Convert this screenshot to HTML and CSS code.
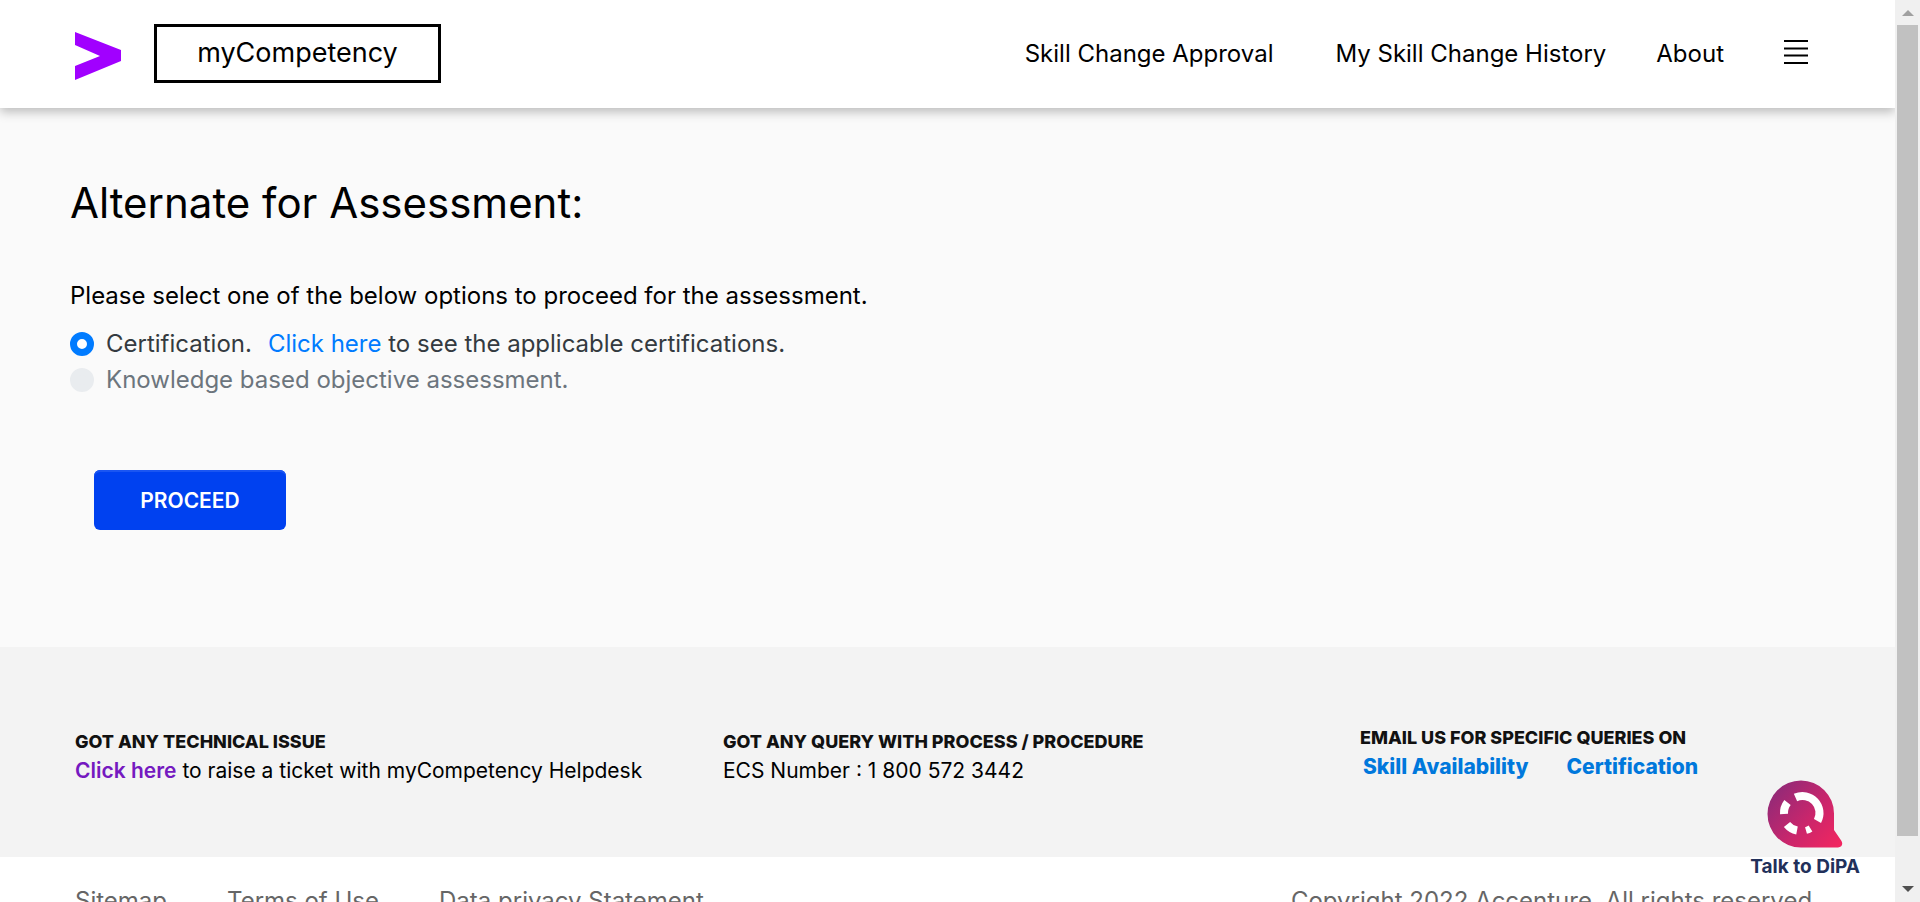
FILE: index.html
```html
<!DOCTYPE html>
<html lang="en">
<head>
<meta charset="utf-8">
<title>myCompetency</title>
<link rel="stylesheet" href="styles.css">
</head>
<body>
<div class="window">
  <div class="page">
    <header class="header">
      <a class="logo" href="#" aria-label="Home">
        <svg width="46" height="48" viewBox="0 0 46 48" aria-hidden="true"><path fill="#a100ff" d="M0 0L46 18V29L0 48V34L25 24L0 13Z"/></svg>
      </a>
      <a class="brand" href="#">myCompetency</a>
      <nav class="nav">
        <a class="nav-approval" href="#">Skill Change Approval</a>
        <a class="nav-history" href="#">My Skill Change History</a>
        <a class="nav-about" href="#">About</a>
        <button class="menu" type="button" aria-label="Menu">
          <svg width="24" height="26" viewBox="0 0 24 26" aria-hidden="true"><path stroke="#000" stroke-width="2" d="M0 2H24M0 9.500H24M0 16.500H24M0 24H24"/></svg>
        </button>
      </nav>
    </header>

    <main class="main">
      <h1 class="title">Alternate for Assessment:</h1>
      <p class="intro">Please select one of the below options to proceed for the assessment.</p>
      <form class="form">
        <div class="option">
          <input class="radio" type="radio" name="mode" id="cert" checked>
          <label for="cert">Certification.</label>
          <span class="hint"><a href="#">Click here</a> to see the applicable certifications.</span>
        </div>
        <div class="option option-disabled">
          <input class="radio" type="radio" name="mode" id="know" disabled>
          <label for="know">Knowledge based objective assessment.</label>
        </div>
        <button class="proceed" type="button">PROCEED</button>
      </form>
    </main>

    <section class="support">
      <div class="support-col">
        <h2>GOT ANY TECHNICAL ISSUE</h2>
        <p><a class="ticket" href="#">Click here</a> to raise a ticket with myCompetency Helpdesk</p>
      </div>
      <div class="support-col">
        <h2>GOT ANY QUERY WITH PROCESS / PROCEDURE</h2>
        <p>ECS Number : 1 800 572 3442</p>
      </div>
      <div class="support-col support-mail">
        <h2>EMAIL US FOR SPECIFIC QUERIES ON</h2>
        <p class="mail-links"><a href="#">Skill Availability</a><a href="#">Certification</a></p>
      </div>
    </section>

    <footer class="footer">
      <a href="#">Sitemap</a>
      <a href="#">Terms of Use</a>
      <a href="#">Data privacy Statement</a>
      <span class="copyright">Copyright 2022 Accenture. All rights reserved.</span>
    </footer>

    <button class="chat" type="button">
      <svg width="76" height="68" viewBox="0 0 76 68" aria-hidden="true">
        <defs><linearGradient id="g" x1="0" y1="0.200" x2="1" y2="1"><stop offset="0" stop-color="#8f2a78"/><stop offset="0.500" stop-color="#c8266c"/><stop offset="1" stop-color="#f5265f"/></linearGradient></defs>
        <path fill="url(#g)" d="M34 0.500A33 33 0 0 1 67 33.500V50L74.500 61Q77 66.500 71 67.500H34A33.500 33.500 0 0 1 34 0.500Z"/>
        <g fill="none" stroke="#fff" stroke-width="8">
          <path d="M28.500 17.500A17 17 0 0 1 50.500 41"/>
          <path d="M20.500 22.500A17 17 0 0 0 17 34"/>
          <path d="M20 44.500A17 17 0 0 0 30 50.500"/>
          <path stroke-width="7" d="M39 50.500A17 17 0 0 0 43.500 48.500"/>
        </g>
      </svg>
      <span>Talk to DiPA</span>
    </button>
  </div>

  <div class="scrollbar" aria-hidden="true">
    <svg width="12" height="6" viewBox="0 0 12 6"><path fill="#a0a0a0" d="M0 6L6 0L12 6Z"/></svg>
    <div class="thumb"></div>
    <svg width="12" height="6" viewBox="0 0 12 6"><path fill="#505050" d="M0 0L6 6L12 0Z"/></svg>
  </div>
</div>
</body>
</html>
```
FILE: styles.css
```css
* { box-sizing: border-box; }
body {
  margin: 0;
  font-family: Inter, "Open Sans", sans-serif;
  font-size: 24px;
  font-weight: 400;
  line-height: 36px;
  color: #000;
  background: #fff;
}
a { text-decoration: none; color: inherit; }
h1, h2, p { margin: 0; }
button { font-family: inherit; border: 0; padding: 0; cursor: pointer; }
svg { display: block; }

.window { display: flex; height: 100vh; overflow: hidden; }
.page { position: relative; flex: 1; min-width: 0; overflow: hidden; }

.header {
  position: relative;
  display: flex;
  align-items: center;
  height: 108px;
  padding: 0 87px 0 75px;
  background: #fff;
  box-shadow: 0 4px 10px rgba(0, 0, 0, 0.25);
}
.logo { margin-top: 4px; }
.brand {
  display: flex;
  align-items: center;
  justify-content: center;
  width: 287px;
  height: 59px;
  margin: 0 0 2px 33px;
  border: 3px solid #000;
  font-size: 27px;
}
.nav { display: flex; align-items: center; margin-left: auto; }
.nav-approval { margin-right: 62px; }
.nav-history { margin-right: 50px; }
.nav-about { margin-right: 60px; }
.menu { margin-bottom: 4px; background: none; }

.main { min-height: 539px; padding: 66px 70px 0; background: #fafafa; }
.title { font-size: 42px; font-weight: 400; line-height: 58px; }
.intro { margin-top: 46px; }
.form { margin-top: 12px; }
.option { display: flex; align-items: center; color: #343a40; white-space: nowrap; }
.hint { margin-left: 16px; }
.hint a { color: #007bff; }
.option-disabled { color: #6c757d; }
.radio {
  appearance: none;
  width: 24px;
  height: 24px;
  margin: 0 12px 0 0;
  border: 7px solid #007bff;
  border-radius: 50%;
  background: #fff;
}
.radio:disabled { border-color: #e9ecef; background: #e9ecef; }
.proceed {
  width: 192px;
  height: 60px;
  margin: 72px 0 0 24px;
  border-radius: 6px;
  background: #0041f0;
  box-shadow: inset 0 2px 0 #1a55f2;
  color: #fff;
  font-size: 21px;
  font-weight: 600;
}

.support {
  display: grid;
  grid-template-columns: 648px 637px 1fr;
  min-height: 210px;
  padding: 80px 75px 0;
  background: #f3f3f3;
  font-size: 21px;
  line-height: 28px;
  white-space: nowrap;
}
.support h2 { font-size: 18px; font-weight: 800; line-height: 30px; color: #111; }
.support-mail { margin-top: -4px; }
.ticket { font-weight: 600; color: #7519c0; }
.mail-links { display: flex; gap: 38px; padding-left: 3px; font-weight: 800; color: #0078dc; }

.footer {
  display: flex;
  gap: 60px;
  padding: 26px 76px 20px 75px;
  color: #666;
  white-space: nowrap;
}
.copyright { margin-left: auto; }

.chat {
  position: absolute;
  right: 35px;
  bottom: 22px;
  display: flex;
  flex-direction: column;
  align-items: center;
  gap: 6px;
  background: none;
  color: #22305a;
  font-size: 19px;
  font-weight: 700;
  line-height: 26px;
}

.scrollbar {
  display: flex;
  flex-direction: column;
  align-items: center;
  width: 25px;
  padding: 10px 2px;
  background: #f0f0f0;
}
.thumb { width: 21px; height: 92%; margin: 9px 0 auto; background: #c1c1c1; }
```
